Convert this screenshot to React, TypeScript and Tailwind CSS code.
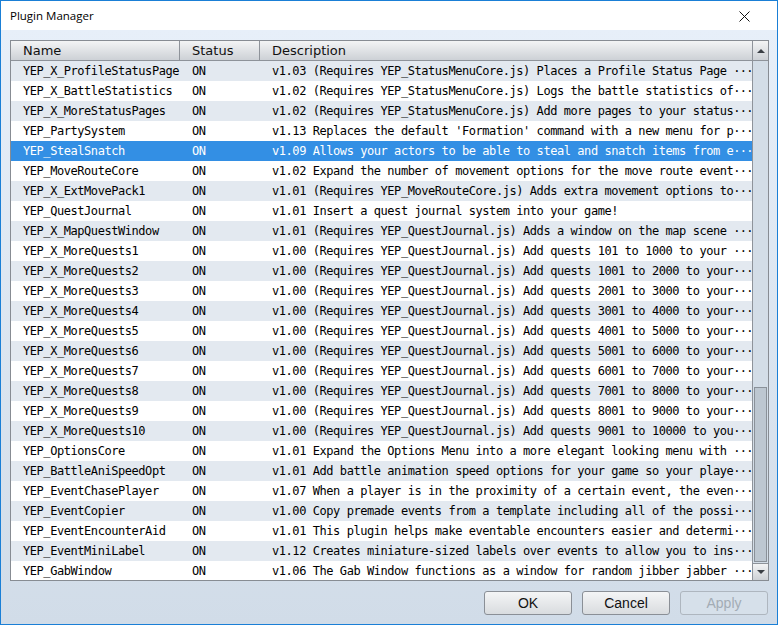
const plugins: [string, string, boolean][] = [
  ['YEP_X_ProfileStatusPage', 'v1.03 (Requires YEP_StatusMenuCore.js) Places a Profile Status Page ', true],
  ['YEP_X_BattleStatistics', 'v1.02 (Requires YEP_StatusMenuCore.js) Logs the battle statistics of', true],
  ['YEP_X_MoreStatusPages', 'v1.02 (Requires YEP_StatusMenuCore.js) Add more pages to your status', true],
  ['YEP_PartySystem', "v1.13 Replaces the default 'Formation' command with a new menu for p", true],
  ['YEP_StealSnatch', 'v1.09 Allows your actors to be able to steal and snatch items from e', true],
  ['YEP_MoveRouteCore', 'v1.02 Expand the number of movement options for the move route event', true],
  ['YEP_X_ExtMovePack1', 'v1.01 (Requires YEP_MoveRouteCore.js) Adds extra movement options to', true],
  ['YEP_QuestJournal', 'v1.01 Insert a quest journal system into your game!', false],
  ['YEP_X_MapQuestWindow', 'v1.01 (Requires YEP_QuestJournal.js) Adds a window on the map scene ', true],
  ['YEP_X_MoreQuests1', 'v1.00 (Requires YEP_QuestJournal.js) Add quests 101 to 1000 to your ', true],
  ['YEP_X_MoreQuests2', 'v1.00 (Requires YEP_QuestJournal.js) Add quests 1001 to 2000 to your', true],
  ['YEP_X_MoreQuests3', 'v1.00 (Requires YEP_QuestJournal.js) Add quests 2001 to 3000 to your', true],
  ['YEP_X_MoreQuests4', 'v1.00 (Requires YEP_QuestJournal.js) Add quests 3001 to 4000 to your', true],
  ['YEP_X_MoreQuests5', 'v1.00 (Requires YEP_QuestJournal.js) Add quests 4001 to 5000 to your', true],
  ['YEP_X_MoreQuests6', 'v1.00 (Requires YEP_QuestJournal.js) Add quests 5001 to 6000 to your', true],
  ['YEP_X_MoreQuests7', 'v1.00 (Requires YEP_QuestJournal.js) Add quests 6001 to 7000 to your', true],
  ['YEP_X_MoreQuests8', 'v1.00 (Requires YEP_QuestJournal.js) Add quests 7001 to 8000 to your', true],
  ['YEP_X_MoreQuests9', 'v1.00 (Requires YEP_QuestJournal.js) Add quests 8001 to 9000 to your', true],
  ['YEP_X_MoreQuests10', 'v1.00 (Requires YEP_QuestJournal.js) Add quests 9001 to 10000 to you', true],
  ['YEP_OptionsCore', 'v1.01 Expand the Options Menu into a more elegant looking menu with ', true],
  ['YEP_BattleAniSpeedOpt', 'v1.01 Add battle animation speed options for your game so your playe', true],
  ['YEP_EventChasePlayer', 'v1.07 When a player is in the proximity of a certain event, the even', true],
  ['YEP_EventCopier', 'v1.00 Copy premade events from a template including all of the possi', true],
  ['YEP_EventEncounterAid', 'v1.01 This plugin helps make eventable encounters easier and determi', true],
  ['YEP_EventMiniLabel', 'v1.12 Creates miniature-sized labels over events to allow you to ins', true],
  ['YEP_GabWindow', 'v1.06 The Gab Window functions as a window for random jibber jabber ', true],
];

const SELECTED = 4;

export default function App() {
  return (
    <div className="w-[778px] h-[625px] flex flex-col border border-[#1a7fd6] bg-white overflow-hidden">
      {/* Title bar */}
      <div className="h-[29px] flex items-center justify-between pl-[9px] pr-[27px] bg-white">
        <span className="text-[11.5px] text-[#000] font-['Open_Sans',sans-serif] pt-[1px]">Plugin Manager</span>
        <svg width="11" height="11" viewBox="0 0 11 11" className="mt-[2px]">
          <path d="M0.5 0.5 L10.5 10.5 M10.5 0.5 L0.5 10.5" stroke="#111" strokeWidth="1" fill="none" />
        </svg>
      </div>

      {/* Body */}
      <div className="flex-1 flex flex-col pt-[10px] pl-[9px] pr-[8px] pb-[9px] bg-gradient-to-b from-[#e7eff9] to-[#d1dce8]">
        {/* List frame */}
        <div className="h-[541px] flex border border-[#878c93] bg-white overflow-hidden">
          <div className="flex-1 flex flex-col overflow-hidden">
            {/* Header */}
            <div className="h-[20px] shrink-0 grid grid-cols-[169px_80px_1fr] bg-gradient-to-b from-[#f3f4f5] to-[#cdd1d6] border-b border-[#8e939a] text-[13px] text-[#111] font-['DejaVu_Sans',sans-serif] leading-[19px]">
              <div className="pl-[12px] border-r border-[#8e939a]">Name</div>
              <div className="pl-[12px] border-r border-[#8e939a]">Status</div>
              <div className="pl-[12px]">Description</div>
            </div>
            {/* Rows */}
            <div className="flex flex-col font-['DejaVu_Sans_Mono',monospace] text-[12px] tracking-[-0.44px]">
              {plugins.map(([name, desc, elided], i) => {
                const selected = i === SELECTED;
                const bg = selected ? 'bg-[#338fe4] text-white' : i % 2 === 0 ? 'bg-[#e3e9f0] text-[#000]' : 'bg-white text-[#000]';
                return (
                  <div key={name} className={`h-[20px] shrink-0 grid grid-cols-[169px_80px_1fr] leading-[20px] whitespace-pre ${bg}`}>
                    <div className="pl-[12px] overflow-hidden">{name}</div>
                    <div className="pl-[12px]">ON</div>
                    <div className="pl-[12px] overflow-hidden">
                      {desc}
                      {elided && <span className="tracking-[-0.8px]">···</span>}
                    </div>
                  </div>
                );
              })}
            </div>
          </div>

          {/* Scrollbar */}
          <div className="w-[16px] shrink-0 flex flex-col border-l border-[#8e939a] bg-[#d3dde7]">
            <div className="h-[20px] shrink-0 flex items-center justify-center bg-gradient-to-b from-[#f3f4f5] to-[#cdd1d6] border-b border-[#8e939a]">
              <svg width="8" height="5" viewBox="0 0 8 5">
                <path d="M0 5 L4 1 L8 5 Z" fill="#3a3f45" />
              </svg>
            </div>
            <div className="flex-1 flex flex-col justify-end px-[1px] pb-[1px]">
              <div className="h-[175px] bg-[#bdc7d1] border border-[#8a9199]" />
            </div>
            <div className="h-[17px] shrink-0 flex items-center justify-center bg-gradient-to-b from-[#f3f4f5] to-[#cdd1d6] border-t border-[#8e939a]">
              <svg width="8" height="5" viewBox="0 0 8 5">
                <path d="M0 0 L8 0 L4 4 Z" fill="#3a3f45" />
              </svg>
            </div>
          </div>
        </div>

        {/* Buttons */}
        <div className="mt-[10px] flex justify-end gap-[10px] pr-[1px] font-['Liberation_Sans',sans-serif] text-[14px]">
          <button className="w-[88px] h-[24px] rounded-[3px] border border-[#8a8f96] bg-gradient-to-b from-[#f4f5f6] to-[#d9dcdf] text-[#111] leading-[22px]">OK</button>
          <button className="w-[88px] h-[24px] rounded-[3px] border border-[#8a8f96] bg-gradient-to-b from-[#f4f5f6] to-[#d9dcdf] text-[#111] leading-[22px]">Cancel</button>
          <button className="w-[88px] h-[24px] rounded-[3px] border border-[#aeb6bf] bg-[#d6e0ea] text-[#a3acb5] leading-[22px]">Apply</button>
        </div>
      </div>
    </div>
  );
}
